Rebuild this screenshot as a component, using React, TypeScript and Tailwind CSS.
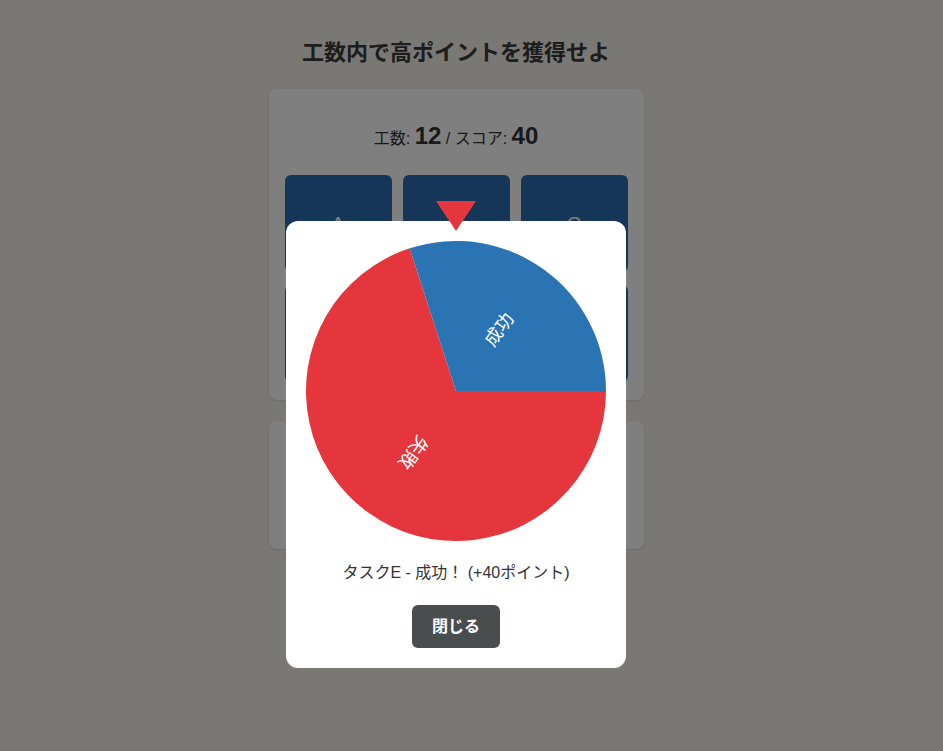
import React from 'react';

// 円グラフの扇形（上から時計回りの角度で指定）
const CX = 150;
const CY = 150;
const R = 150;

function pt(deg: number, r: number) {
  const rad = ((deg - 90) * Math.PI) / 180;
  return [CX + r * Math.cos(rad), CY + r * Math.sin(rad)];
}

function slice(from: number, to: number) {
  const [x1, y1] = pt(from, R);
  const [x2, y2] = pt(to, R);
  const large = to - from > 180 ? 1 : 0;
  return `M${CX},${CY} L${x1},${y1} A${R},${R} 0 ${large} 1 ${x2},${y2} Z`;
}

const SUCCESS_FROM = -18;
const SUCCESS_TO = 90;

const Wheel: React.FC = () => {
  const okMid = (SUCCESS_FROM + SUCCESS_TO) / 2;
  const ngMid = (SUCCESS_TO + SUCCESS_FROM + 360) / 2;
  const [ox, oy] = pt(okMid, 75);
  const [nx, ny] = pt(ngMid, 75);

  return (
    <svg width="300" height="300" viewBox="0 0 300 300" className="block">
      <path d={slice(SUCCESS_TO, SUCCESS_FROM + 360)} fill="#e6363d" />
      <path d={slice(SUCCESS_FROM, SUCCESS_TO)} fill="#2b74b3" />
      <text
        x={ox}
        y={oy}
        fill="#ffffff"
        fontSize="18"
        textAnchor="middle"
        dominantBaseline="middle"
        transform={`rotate(${okMid - 90} ${ox} ${oy})`}
        style={{ fontFamily: '"Noto Sans CJK JP", sans-serif' }}
      >
        成功
      </text>
      <text
        x={nx}
        y={ny}
        fill="#ffffff"
        fontSize="18"
        textAnchor="middle"
        dominantBaseline="middle"
        transform={`rotate(${ngMid - 90} ${nx} ${ny})`}
        style={{ fontFamily: '"Noto Sans CJK JP", sans-serif' }}
      >
        失敗
      </text>
    </svg>
  );
};

const tasks = ['A', 'B', 'C', 'D', 'E', 'F'];

const App: React.FC = () => {
  return (
    <div
      className="min-h-[751px] bg-[#f4f1ea] text-[#333] pr-[31px]"
      style={{ fontFamily: '"Liberation Sans", "Noto Sans CJK JP", sans-serif' }}
    >
      <div className="w-[375px] mx-auto pt-[36px]">
        <h1 className="text-[22px] leading-[33px] font-bold text-center mb-5 text-[#3a3a3a]">
          工数内で高ポイントを獲得せよ
        </h1>

        {/* スコアとタスク */}
        <div className="bg-white rounded-lg shadow-sm px-4 pt-4 pb-[18px]">
          <div className="h-[62px] mb-2 flex items-center justify-center">
            <p className="text-base">
              工数: <span className="text-[24px] font-bold">12</span> / スコア:{' '}
              <span className="text-[24px] font-bold">40</span>
            </p>
          </div>
          <div className="grid grid-cols-3 gap-x-[11px] gap-y-[13px]">
            {tasks.map((t) => (
              <button
                key={t}
                className="h-[97px] rounded-md bg-[#2b6cb0] text-white text-[20px] flex items-center justify-center"
              >
                {t}
              </button>
            ))}
          </div>
        </div>

        {/* 履歴 */}
        <div className="bg-white rounded-lg shadow-sm mt-[21px] h-[128px]"></div>
      </div>

      {/* 結果モーダル */}
      <div className="fixed inset-0 bg-black/50 flex flex-col items-center pt-[221px] pr-[31px]">
        <div className="relative w-[340px] bg-white rounded-xl p-5 flex flex-col items-center">
          <div className="absolute -top-5 left-1/2 -translate-x-1/2 w-0 h-0 border-l-[20px] border-r-[20px] border-t-[30px] border-l-transparent border-r-transparent border-t-[#e6363d]" />
          <Wheel />
          <p className="mt-5 text-base leading-6 text-[#333]">タスクE - 成功！ (+40ポイント)</p>
          <button className="mt-5 h-[43px] px-5 rounded-md bg-[#4a4d4e] text-white font-bold text-base">
            閉じる
          </button>
        </div>
      </div>
    </div>
  );
};

export default App;
